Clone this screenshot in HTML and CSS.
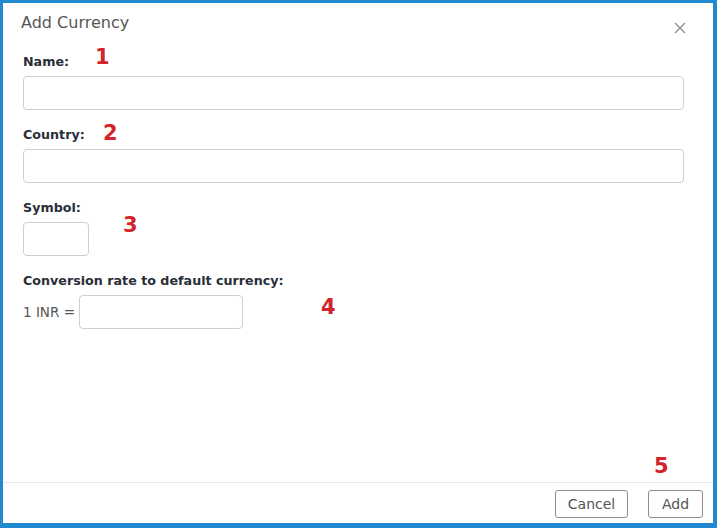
FILE: index.html
```html
<!DOCTYPE html>
<html>
<head>
<meta charset="utf-8">
<link rel="stylesheet" href="styles.css">
</head>
<body>
<div class="frame">
  <div class="header">
    <h1 class="title">Add Currency</h1>
    <button class="close" aria-label="Close">
      <svg width="12" height="12" viewBox="0 0 12 12"><path d="M1 1L11 11M11 1L1 11" stroke="#8a8a8a" stroke-width="1.3" fill="none"/></svg>
    </button>
  </div>
  <div class="form">
    <div class="group">
      <label class="label">Name:</label>
      <input class="input input-wide" type="text">
    </div>
    <div class="group">
      <label class="label">Country:</label>
      <input class="input input-wide" type="text">
    </div>
    <div class="group">
      <label class="label">Symbol:</label>
      <input class="input input-symbol" type="text">
    </div>
    <div class="group">
      <label class="label">Conversion rate to default currency:</label>
      <div class="rate-row">
        <span class="rate-text">1 INR =</span>
        <input class="input input-rate" type="text">
      </div>
    </div>
  </div>
  <div class="footer">
    <button class="btn">Cancel</button>
    <button class="btn btn-add">Add</button>
  </div>
  <span class="note n1">1</span>
  <span class="note n2">2</span>
  <span class="note n3">3</span>
  <span class="note n4">4</span>
  <span class="note n5">5</span>
</div>
</body>
</html>
```
FILE: styles.css
```css
html, body {
  margin: 0;
  padding: 0;
  background: #ffffff;
}
.frame {
  position: relative;
  width: 717px;
  height: 528px;
  box-sizing: border-box;
  border-style: solid;
  border-color: #2189cf;
  border-width: 3px 4px 5px 3px;
  display: flex;
  flex-direction: column;
  font-family: "DejaVu Sans", sans-serif;
  background: #fff;
}
.header {
  display: flex;
  justify-content: space-between;
  align-items: flex-start;
  height: 22px;
  padding: 9px 27px 0 18px;
}
.title {
  margin: 0;
  font-size: 16px;
  line-height: 22px;
  font-weight: normal;
  color: #565656;
}
.close {
  border: 0;
  background: none;
  padding: 0;
  margin-top: 10px;
  width: 12px;
  height: 12px;
  display: block;
}
.close svg { display: block; }
.form {
  flex: 1;
  padding: 19px 0 0 20px;
}
.group {
  margin-bottom: 16px;
}
.label {
  display: block;
  font-size: 12.7px;
  font-weight: bold;
  line-height: 18px;
  color: #2a2e38;
  margin-bottom: 5px;
}
.input {
  display: block;
  box-sizing: border-box;
  height: 34px;
  border: 1px solid #cfcfcf;
  border-radius: 4px;
  background: #fff;
  margin: 0;
  padding: 0 8px;
}
.input-wide { width: 661px; }
.input-symbol { width: 66px; }
.input-rate { width: 164px; }
.rate-row {
  display: flex;
  align-items: center;
  gap: 4px;
}
.rate-text {
  font-size: 13.5px;
  color: #555;
}
.footer {
  border-top: 1px solid #e6e6e6;
  display: flex;
  justify-content: flex-end;
  gap: 20px;
  padding: 7px 10px 5px 0;
}
.btn {
  box-sizing: border-box;
  height: 28px;
  width: 73px;
  border: 1px solid #8c8c8c;
  border-radius: 3px;
  background: #fff;
  color: #555;
  font-family: "DejaVu Sans", sans-serif;
  font-size: 14px;
  padding: 0;
}
.btn-add { width: 55px; }
.note {
  position: absolute;
  font-family: "DejaVu Sans", sans-serif;
  font-weight: bold;
  font-size: 21px;
  line-height: 21px;
  color: #d3232b;
}
.n1 { left: 92px; top: 44px; }
.n2 { left: 100px; top: 120px; }
.n3 { left: 120px; top: 212px; }
.n4 { left: 318px; top: 294px; }
.n5 { left: 651px; top: 453px; }
```
